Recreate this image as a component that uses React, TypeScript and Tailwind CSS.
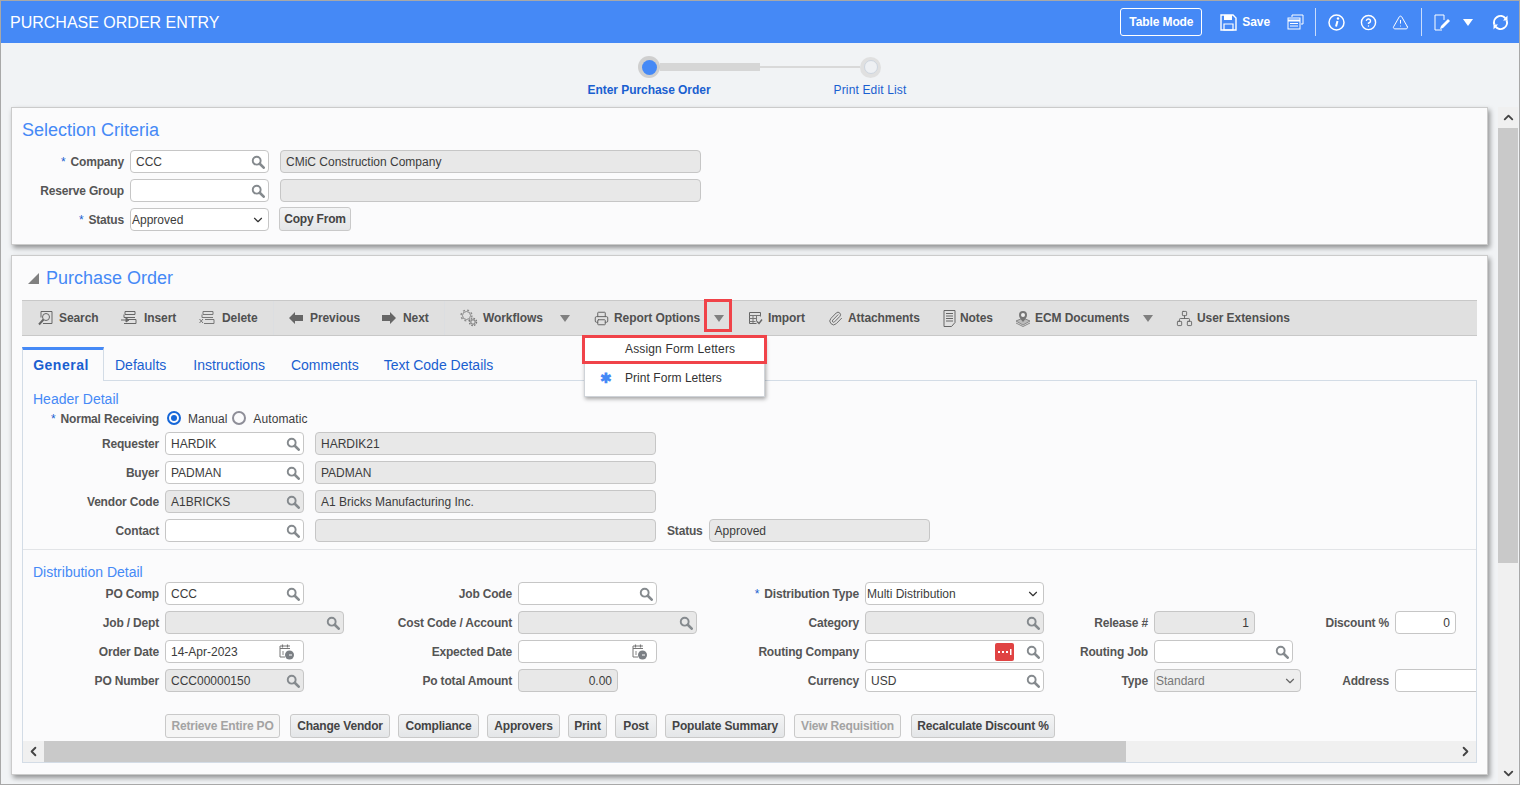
import type { ReactNode } from "react"
import { ChevronDown, ChevronLeft, ChevronRight, ChevronUp, CircleHelp, Network, Paperclip, Printer, TriangleAlert } from "lucide-react"

const SearchIcon = () => (
  <svg width="14" height="14" viewBox="0 0 16 16" fill="none" className="shrink-0">
    <circle cx="6.5" cy="6.5" r="4.5" stroke="#858a8e" strokeWidth="2.2" />
    <path d="M10 10l4.500 4.500" stroke="#858a8e" strokeWidth="3" strokeLinecap="round" />
  </svg>
)

const Caret = () => (
  <svg width="10" height="7" viewBox="0 0 10 7" className="shrink-0">
    <path d="M0 0h10L5 7z" fill="#808080" />
  </svg>
)

const CalendarIcon = () => (
  <svg width="18" height="18" viewBox="0 0 18 18" fill="none" className="shrink-0">
    <path d="M12 3H2v11h5" stroke="#777" strokeWidth="1" />
    <path d="M2 5.500h10M4.500 1.500v3M9.500 1.500v3" stroke="#777" strokeWidth="1.200" />
    <path d="M5 8v4" stroke="#888" strokeWidth="1" />
    <circle cx="11.500" cy="12" r="4.500" fill="#7b7f84" />
    <path d="M11 12h3" stroke="#fff" strokeWidth="1" />
  </svg>
)

const SearchToolIcon = () => (
  <svg width="16" height="16" viewBox="0 0 16 16" fill="none">
    <path d="M3 1.500h11v12H5M3 1.500v6" stroke="#666" />
    <circle cx="8" cy="7" r="3.500" stroke="#666" />
    <path d="M5.500 9.500L1 14.500" stroke="#666" strokeWidth="2" />
  </svg>
)

const InsertIcon = () => (
  <svg width="16" height="16" viewBox="0 0 16 16" fill="none">
    <path d="M4 1.500h10v3H4zM6 9.500h9v4H3" stroke="#666" />
    <path d="M3 4.500v3h11" stroke="#666" />
    <path d="M0 10h5M5 8v4l3-2z" fill="#666" stroke="#666" />
  </svg>
)

const DeleteIcon = () => (
  <svg width="16" height="16" viewBox="0 0 16 16" fill="none">
    <path d="M4 1.500h10v3H4zM6 9.500h9v4H5" stroke="#777" />
    <path d="M3 4.500v3h11" stroke="#777" />
    <path d="M0.500 9l3.500 4M4 9l-3.500 4" stroke="#777" />
  </svg>
)

const LeftArrow = () => (
  <svg width="14" height="12" viewBox="0 0 14 12"><path d="M0 6l6-6v3h8v6H6v3z" fill="#666" /></svg>
)

const RightArrow = () => (
  <svg width="14" height="12" viewBox="0 0 14 12"><path d="M14 6L8 0v3H0v6h8v3z" fill="#666" /></svg>
)

const GearsIcon = () => (
  <svg width="18" height="18" viewBox="0 0 18 18" fill="none">
    <circle cx="6.500" cy="6.500" r="4" stroke="#8a8a8a" strokeWidth="1" />
    <circle cx="6.500" cy="6.500" r="5.400" stroke="#8a8a8a" strokeWidth="1.400" strokeDasharray="2 2.240" />
    <circle cx="13" cy="13" r="2.200" stroke="#777" strokeWidth="1" />
    <circle cx="13" cy="13" r="3.500" stroke="#777" strokeWidth="1.400" strokeDasharray="1.600 1.150" />
  </svg>
)

const ImportIcon = () => (
  <svg width="15" height="15" viewBox="0 0 15 15" fill="none">
    <path d="M1.500 1.500h11v4M1.500 1.500v11h7" stroke="#666" />
    <path d="M1.500 4.500h11M1.500 7.500h7M1.500 10.500h6M5 4.500v8M8.500 4.500v6" stroke="#777" />
    <path d="M9 10.500l2 2 3-4" stroke="#666" strokeWidth="1.400" />
  </svg>
)

const NotesIcon = () => (
  <svg width="13" height="17" viewBox="0 0 13 17" fill="none">
    <path d="M1 .5h11v12l-3.500 4H1z" stroke="#666" />
    <path d="M3 3.500h7M3 6h7M3 8.500h7M3 11h7" stroke="#666" />
  </svg>
)

const EcmIcon = () => (
  <svg width="16" height="17" viewBox="0 0 16 17" fill="none">
    <path d="M1 11l7-3 7 3-7 4z" fill="#bbb" stroke="#888" />
    <path d="M1 13l7 3.500 7-3.500" stroke="#888" />
    <path d="M8 12C5.500 9 4 7.500 4 5a4 4 0 018 0c0 2.500-1.500 4-4 7z" fill="#777" />
    <circle cx="8" cy="5" r="2" fill="#eee" />
  </svg>
)

const SaveIcon = () => (
  <svg width="17" height="17" viewBox="0 0 17 17" fill="none">
    <path d="M1 1h12l3 3v12H1z" stroke="#fff" strokeWidth="1.400" />
    <path d="M4 1h8v5H4z" fill="#fff" />
    <path d="M4 10h9v6H4z" stroke="#fff" strokeWidth="1.200" />
  </svg>
)

const PagesIcon = () => (
  <svg width="17" height="16" viewBox="0 0 17 16" fill="none">
    <path d="M5 3V1h11v9h-2" stroke="#fff" />
    <rect x="1" y="4" width="12" height="11" stroke="#fff" />
    <path d="M1 6.500h12" stroke="#fff" strokeWidth="2" />
    <path d="M3 9.500h8M3 12h8" stroke="#fff" />
  </svg>
)

const InfoIcon = () => (
  <svg width="17" height="17" viewBox="0 0 17 17" fill="none">
    <circle cx="8.500" cy="8.500" r="7.500" stroke="#fff" strokeWidth="1.500" />
    <path d="M9.500 7L8 12.500" stroke="#fff" strokeWidth="2" />
    <circle cx="10" cy="4.500" r="1.200" fill="#fff" />
  </svg>
)

const EditIcon = () => (
  <svg width="17" height="17" viewBox="0 0 17 17" fill="none">
    <path d="M10 1H1v15h7M10 1v5" stroke="#fff" />
    <path d="M6 15l1-3 7-7 2 2-7 7z" fill="#fff" />
  </svg>
)

const RefreshIcon = () => (
  <svg width="17" height="17" viewBox="0 0 17 17" fill="none">
    <path d="M2.400 10.700A6.500 6.500 0 0113.500 4.300M14.600 6.300A6.500 6.500 0 013.500 12.700" stroke="#fff" strokeWidth="2" />
    <path d="M15.500 1.500v5H11zM1.500 15.500v-5H6z" fill="#fff" />
  </svg>
)

const DotsIcon = () => (
  <svg width="19" height="18" viewBox="0 0 19 18" className="shrink-0 mr-[7px]">
    <rect width="19" height="18" rx="2" fill="#e04343" />
    <path d="M3 8h2v2H3zM7 8h2v2H7zM11 8h2v2h-2zM15 6h1.500v6H15z" fill="#fff" />
  </svg>
)

function Label({ children, req }: { children: ReactNode; req?: boolean }) {
  return (
    <div className="h-[23px] text-right text-[12px] font-bold leading-[25px] tracking-[-0.18px] text-[#555555] whitespace-nowrap">
      {req && <span className="text-[#1a5fd0] font-normal mr-[5px]">*</span>}
      {children}
    </div>
  )
}

function Field({
  value,
  width,
  grey,
  right,
  search,
  after,
}: {
  value?: string
  width: string
  grey?: boolean
  right?: boolean
  search?: boolean
  after?: ReactNode
}) {
  return (
    <div
      className={`${width} ${grey ? "bg-[#e8e8e8]" : "bg-white"} h-[23px] shrink-0 flex items-center gap-[5px] border border-[#c6c6c6] rounded-[4px] pl-[5px] pr-[3px] text-[12px] text-[#3c3c3c]`}
    >
      <span className={`flex-1 whitespace-nowrap ${right ? "text-right pr-[2px]" : ""}`}>{value}</span>
      {after}
      {search && <SearchIcon />}
    </div>
  )
}

function Select({ value, width, grey }: { value: string; width: string; grey?: boolean }) {
  return (
    <div
      className={`${width} ${grey ? "bg-[#eeeeee] text-[#777]" : "bg-white text-[#3c3c3c]"} h-[23px] shrink-0 flex items-center justify-between border border-[#c6c6c6] rounded-[4px] pl-px pr-[3px] text-[12px]`}
    >
      <span>{value}</span>
      <ChevronDown size={14} strokeWidth={2} color={grey ? "#666" : "#333"} />
    </div>
  )
}

function FormButton({ children, width, off }: { children: ReactNode; width: string; off?: boolean }) {
  return (
    <div
      className={`${width} ${off ? "bg-[#f5f5f5] text-[#a3a3a3]" : "bg-gradient-to-b from-[#f3f4f5] to-[#e4e6e8] text-[#444444]"} h-[24px] shrink-0 flex items-center justify-center border border-[#c9c9c9] rounded-[3px] text-[12px] font-bold tracking-[-0.18px] whitespace-nowrap`}
    >
      {children}
    </div>
  )
}

function ToolItem({ icon, label, width, slot, caret }: { icon: ReactNode; label: string; width: string; slot: string; caret?: string }) {
  return (
    <div className={`${width} shrink-0 flex items-center text-[12px] font-bold tracking-[-0.08px] text-[#505050] whitespace-nowrap`}>
      <span className={`${slot} shrink-0 flex items-center`}>{icon}</span>
      {label}
      {caret && (
        <span className={`${caret} mt-px`}>
          <Caret />
        </span>
      )}
    </div>
  )
}

export default function App() {
  return (
    <div className="relative w-[1520px] h-[785px] overflow-hidden box-border border border-[#a8a8a8] bg-[#f1f3f5] font-['Liberation_Sans',Arial,sans-serif]">
      {/* Header */}
      <div className="h-[42px] bg-[#4589f6] flex items-center pl-[9px] text-white">
        <div className="text-[16px] pt-px flex-1">PURCHASE ORDER ENTRY</div>
        <div className="w-[82px] h-[28px] flex items-center justify-center border border-white rounded-[3px] text-[12px] font-bold tracking-[-0.1px]">Table Mode</div>
        <span className="ml-[18px]"><SaveIcon /></span>
        <span className="ml-[5px] text-[12px] font-bold tracking-[-0.1px]">Save</span>
        <span className="ml-[17px]"><PagesIcon /></span>
        <div className="ml-[11px] w-px h-[28px] bg-[#c9dcfb]" />
        <span className="ml-[12px]"><InfoIcon /></span>
        <CircleHelp size={17} strokeWidth={2} className="ml-[15px]" />
        <TriangleAlert size={17} strokeWidth={1.4} className="ml-[15px]" />
        <div className="ml-[12px] w-px h-[28px] bg-[#c9dcfb]" />
        <span className="ml-[12px]"><EditIcon /></span>
        <svg width="10" height="7" viewBox="0 0 10 7" className="ml-[12px]"><path d="M0 0h10L5 7z" fill="#fff" /></svg>
        <span className="ml-[19px] mr-[10px]"><RefreshIcon /></span>
      </div>

      {/* Stepper */}
      <div className="h-[64px] pt-[13px]">
        <div className="flex items-center ml-[637px] h-[22px]">
          <div className="w-[22px] h-[22px] rounded-full bg-[#cfcfcf] flex items-center justify-center">
            <div className="w-[15px] h-[15px] rounded-full bg-[#4589f6]" />
          </div>
          <div className="w-[100px] h-[8px] bg-[#d6d6d6]" />
          <div className="w-[100px] h-[2px] bg-[#d9d9d9]" />
          <div className="w-[21px] h-[21px] rounded-full bg-[#e0e0e0] flex items-center justify-center">
            <div className="w-[14px] h-[14px] rounded-full bg-[#eef0f3] border border-[#cdd5df]" />
          </div>
        </div>
        <div className="flex ml-[548px] mt-[3px] text-[12px] text-[#1a5fd0]">
          <div className="w-[200px] text-center font-bold tracking-[-0.05px]">Enter Purchase Order</div>
          <div className="w-[200px] ml-[21px] text-center tracking-[0.15px]">Print Edit List</div>
        </div>
      </div>

      <div className="flex">
        <div className="w-[1487px] pl-[10px] shrink-0">
          {/* Selection Criteria */}
          <div className="h-[138px] border border-[#cbcbcb] bg-[#fbfbfc] shadow-[2px_3px_5px_rgba(0,0,0,0.4)] pt-[11px] px-[10px]">
            <div className="text-[18px] leading-[22px] text-[#4589f6]">Selection Criteria</div>
            <div className="mt-[9px] grid grid-cols-[102px_139px_421px] gap-y-[6px] gap-x-[6px]">
              <Label req>Company</Label>
              <Field value="CCC" width="w-[139px]" search />
              <div className="ml-[5px]"><Field value="CMiC Construction Company" width="w-[421px]" grey /></div>
              <Label>Reserve Group</Label>
              <Field width="w-[139px]" search />
              <div className="ml-[5px]"><Field width="w-[421px]" grey /></div>
              <Label req>Status</Label>
              <Select value="Approved" width="w-[139px]" />
              <div className="ml-[4px] -mt-px"><FormButton width="w-[72px]">Copy From</FormButton></div>
            </div>
          </div>

          {/* Purchase Order */}
          <div className="mt-[10px] h-[520px] border border-[#cbcbcb] bg-[#fbfbfc] shadow-[2px_3px_5px_rgba(0,0,0,0.4)] pt-[11px] px-[10px]">
            <div className="flex items-center h-[22px]">
              <svg width="11" height="11" viewBox="0 0 11 11" className="ml-[6px]"><path d="M11 0v11H0z" fill="#808080" /></svg>
              <span className="ml-[7px] text-[18px] text-[#4589f6]">Purchase Order</span>
            </div>

            <div className="mt-[11px] h-[36px] bg-[#e0e0e0] border-y border-[#c8c8c8] flex items-center pl-[16px]">
              <ToolItem icon={<SearchToolIcon />} label="Search" width="w-[83px]" slot="w-[21px]" />
              <ToolItem icon={<InsertIcon />} label="Insert" width="w-[78px]" slot="w-[23px]" />
              <ToolItem icon={<DeleteIcon />} label="Delete" width="w-[74px]" slot="w-[23px]" />
              <div className="w-px h-full bg-[#dcdee1] mr-[15px]" />
              <ToolItem icon={<LeftArrow />} label="Previous" width="w-[93px]" slot="w-[21px]" />
              <ToolItem icon={<RightArrow />} label="Next" width="w-[62px]" slot="w-[21px]" />
              <div className="w-px h-full bg-[#dcdee1] mr-[15px]" />
              <ToolItem icon={<GearsIcon />} label="Workflows" width="w-[134px]" slot="w-[23px]" caret="ml-[17px]" />
              <ToolItem icon={<Printer size={15} strokeWidth={1.6} color="#666" />} label="Report Options" width="w-[154px]" slot="w-[20px]" caret="ml-[14px]" />
              <ToolItem icon={<ImportIcon />} label="Import" width="w-[80px]" slot="w-[20px]" />
              <ToolItem icon={<Paperclip size={15} strokeWidth={1.5} color="#666" />} label="Attachments" width="w-[115px]" slot="w-[20px]" />
              <ToolItem icon={<NotesIcon />} label="Notes" width="w-[72px]" slot="w-[17px]" />
              <ToolItem icon={<EcmIcon />} label="ECM Documents" width="w-[161px]" slot="w-[20px]" caret="ml-[14px]" />
              <ToolItem icon={<Network size={17} strokeWidth={1.3} color="#666" />} label="User Extensions" width="w-[120px]" slot="w-[21px]" />
            </div>

            {/* Tabs */}
            <div className="mt-[11px] flex h-[33px] text-[14px] text-[#1a5fd0]">
              <div className="w-[82px] -mb-px relative h-[34px] pr-[4px] border-t-[3px] border-x border-t-[#4589f6] border-x-[#d3dce6] bg-[#fbfbfc] font-bold tracking-[0.5px] flex items-center justify-center">General</div>
              <div className="ml-[11px] leading-[36px]">Defaults</div>
              <div className="ml-[27px] leading-[36px]">Instructions</div>
              <div className="ml-[26px] leading-[36px]">Comments</div>
              <div className="ml-[25px] leading-[36px]">Text Code Details</div>
            </div>

            <div className="h-[383px] border border-[#d3dce6] overflow-hidden">
              <div className="pl-[10px] pt-[8px] text-[14px] leading-[20px] text-[#4589f6]">Header Detail</div>
              <div className="mt-px h-[16px] flex items-center">
                <div className="w-[136px]"><Label req>Normal Receiving</Label></div>
                <div className="ml-[8px] w-[14px] h-[14px] rounded-full border-2 border-[#1566d8] flex items-center justify-center">
                  <div className="w-[6px] h-[6px] rounded-full bg-[#1566d8]" />
                </div>
                <span className="ml-[7px] mt-[2px] text-[12px] text-[#3c3c3c]">Manual</span>
                <div className="ml-[5px] w-[14px] h-[14px] rounded-full border-2 border-[#8e8e98]" />
                <span className="ml-[7px] mt-[2px] text-[12px] text-[#3c3c3c] tracking-[0.1px]">Automatic</span>
              </div>

              <div className="mt-[6px] flex flex-col gap-[6px]">
                {[
                  { label: "Requester", value: "HARDIK", desc: "HARDIK21" },
                  { label: "Buyer", value: "PADMAN", desc: "PADMAN" },
                  { label: "Vendor Code", value: "A1BRICKS", desc: "A1 Bricks Manufacturing Inc.", grey: true },
                  { label: "Contact", value: "", desc: "" },
                ].map((row) => (
                  <div key={row.label} className="flex items-center">
                    <div className="w-[136px]"><Label>{row.label}</Label></div>
                    <div className="ml-[6px]"><Field value={row.value} width="w-[139px]" grey={row.grey} search /></div>
                    <div className="ml-[11px]"><Field value={row.desc} width="w-[341px]" grey /></div>
                    {row.label === "Contact" && (
                      <>
                        <div className="ml-[11px]"><Label>Status</Label></div>
                        <div className="ml-[6px]"><Field value="Approved" width="w-[221px]" grey /></div>
                      </>
                    )}
                  </div>
                ))}
              </div>

              <div className="mt-[7px] h-px bg-[#e2e4e7]" />
              <div className="pl-[10px] pt-[12px] text-[14px] leading-[20px] text-[#4589f6]">Distribution Detail</div>

              <div className="grid grid-cols-[136px_185px_156px_183px_152px_179px_98px_151px_78px_100px] gap-x-[6px] gap-y-[6px] w-[1500px]">
                <Label>PO Comp</Label>
                <Field value="CCC" width="w-[139px]" search />
                <Label>Job Code</Label>
                <Field width="w-[139px]" search />
                <Label req>Distribution Type</Label>
                <Select value="Multi Distribution" width="w-[179px]" />
                <div />
                <div />
                <div />
                <div />

                <Label>Job / Dept</Label>
                <Field width="w-[179px]" grey search />
                <Label>Cost Code / Account</Label>
                <Field width="w-[179px]" grey search />
                <Label>Category</Label>
                <Field width="w-[179px]" grey search />
                <Label>Release #</Label>
                <Field value="1" width="w-[101px]" grey right />
                <Label>Discount %</Label>
                <Field value="0" width="w-[61px]" right />

                <Label>Order Date</Label>
                <Field value="14-Apr-2023" width="w-[139px]" after={<span className="mr-[4px] flex"><CalendarIcon /></span>} />
                <Label>Expected Date</Label>
                <Field width="w-[139px]" after={<span className="mr-[4px] flex"><CalendarIcon /></span>} />
                <Label>Routing Company</Label>
                <Field width="w-[179px]" search after={<DotsIcon />} />
                <Label>Routing Job</Label>
                <Field width="w-[139px]" search />
                <div />
                <div />

                <Label>PO Number</Label>
                <Field value="CCC00000150" width="w-[139px]" grey search />
                <Label>Po total Amount</Label>
                <Field value="0.00" width="w-[100px]" grey right />
                <Label>Currency</Label>
                <Field value="USD" width="w-[179px]" search />
                <Label>Type</Label>
                <Select value="Standard" width="w-[147px]" grey />
                <Label>Address</Label>
                <Field width="w-[100px]" />
              </div>

              <div className="mt-[22px] ml-[142px] flex">
                <FormButton width="w-[115px]" off>Retrieve Entire PO</FormButton>
                <div className="ml-[10px]"><FormButton width="w-[100px]">Change Vendor</FormButton></div>
                <div className="ml-[8px]"><FormButton width="w-[81px]">Compliance</FormButton></div>
                <div className="ml-[8px]"><FormButton width="w-[73px]">Approvers</FormButton></div>
                <div className="ml-[8px]"><FormButton width="w-[39px]">Print</FormButton></div>
                <div className="ml-[8px]"><FormButton width="w-[42px]">Post</FormButton></div>
                <div className="ml-[8px]"><FormButton width="w-[120px]">Populate Summary</FormButton></div>
                <div className="ml-[9px]"><FormButton width="w-[107px]" off>View Requisition</FormButton></div>
                <div className="ml-[10px]"><FormButton width="w-[144px]">Recalculate Discount %</FormButton></div>
              </div>

              {/* Horizontal scrollbar */}
              <div className="mt-[3px] h-[21px] flex bg-[#f0f0f0]">
                <div className="w-[21px] flex items-center justify-center">
                  <ChevronLeft size={15} strokeWidth={3} color="#444" />
                </div>
                <div className="w-[1082px] bg-[#c9c9c9]" />
                <div className="flex-1 flex items-center justify-end pr-[3px]">
                  <ChevronRight size={15} strokeWidth={3} color="#444" />
                </div>
              </div>
            </div>
          </div>
        </div>

        {/* Vertical scrollbar */}
        <div className="ml-[10px] w-[20px] h-[677px] bg-[#f0f0f0] flex flex-col">
          <div className="h-[21px] flex items-center justify-center">
            <ChevronUp size={15} strokeWidth={3} color="#444" />
          </div>
          <div className="h-[435px] bg-[#c9c9c9]" />
          <div className="flex-1 flex items-end justify-center pb-[3px]">
            <ChevronDown size={15} strokeWidth={3} color="#444" />
          </div>
        </div>
      </div>

      {/* Dropdown menu */}
      <div className="absolute left-[583px] top-[336px] w-[181px] h-[60px] bg-white border border-[#cfd3d8] shadow-[1px_2px_4px_rgba(0,0,0,0.35)] text-[12px] text-[#333]">
        <div className="h-[21px] pl-[40px] flex items-center tracking-[0.15px]">Assign Form Letters</div>
        <div className="h-[38px] pl-[15px] flex items-center tracking-[0.05px]">
          <span className="w-[25px] text-[14px] font-bold text-[#4589f6] leading-none">✱</span>
          Print Form Letters
        </div>
      </div>

      {/* Red callouts */}
      <div className="absolute left-[703px] top-[298px] w-[28px] h-[33px] border-[3px] border-[#f04349]" />
      <div className="absolute left-[581px] top-[334px] w-[185px] h-[29px] border-[3px] border-[#f04349]" />
    </div>
  )
}
